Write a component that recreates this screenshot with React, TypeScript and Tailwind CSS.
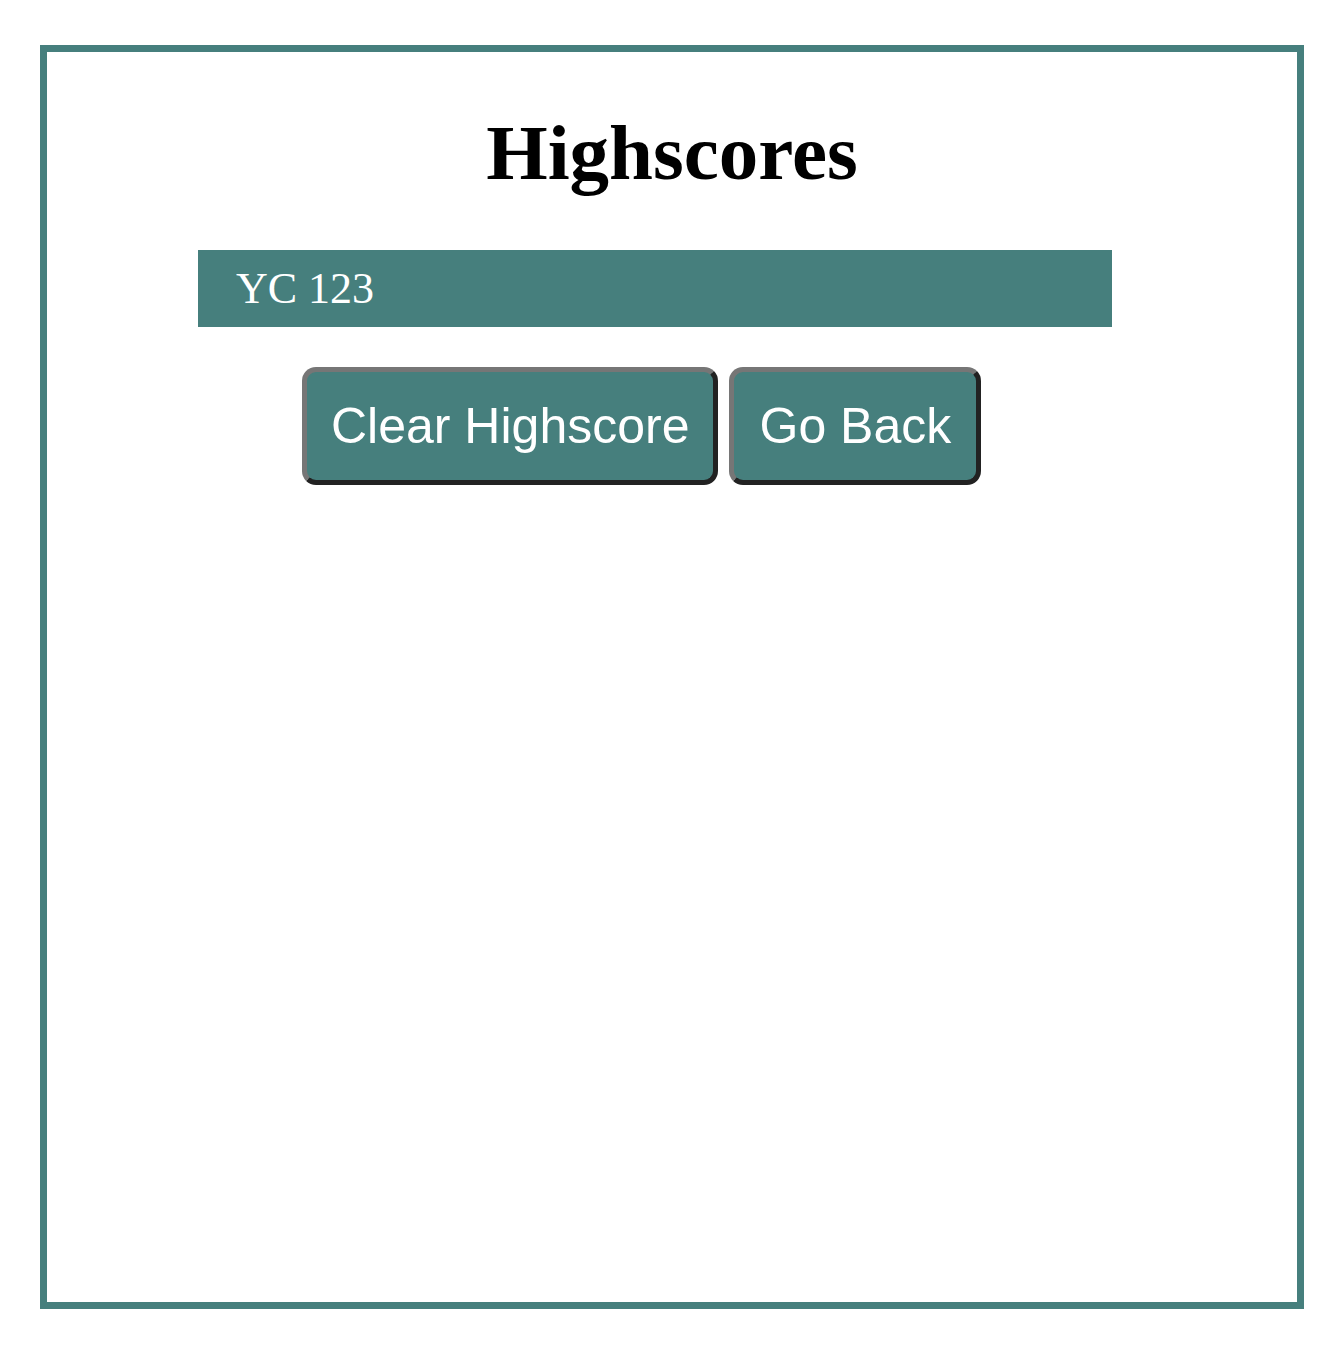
export default function App() {
  return (
    <div className="min-h-[1360px] bg-white pl-[40px] pt-[45px]">
      <div className="w-[1264px] h-[1264px] border-[7px] border-[#467f7d] bg-white">
        <h1
          className="text-center text-[79px] font-bold text-black leading-none mt-[61px]"
          style={{ fontFamily: '"Liberation Serif", "Times New Roman", serif' }}
        >
          Highscores
        </h1>
        <div className="ml-[151px] w-[914px] h-[77px] mt-[58px] bg-[#467f7d] flex items-center pl-[38px]">
          <span
            className="text-white text-[44px] leading-none"
            style={{ fontFamily: '"Liberation Serif", "Times New Roman", serif' }}
          >
            YC 123
          </span>
        </div>
        <div
          className="flex ml-[255px] mt-[40px] gap-[11px]"
          style={{ fontFamily: '"Liberation Sans", Arial, sans-serif' }}
        >
          <button className="h-[118px] px-[24px] bg-[#467f7d] text-white text-[50px] rounded-[14px] border-[5px] border-t-[#767676] border-l-[#767676] border-b-[#222] border-r-[#222]">
            Clear Highscore
          </button>
          <button className="h-[118px] px-[25px] bg-[#467f7d] text-white text-[50px] rounded-[14px] border-[5px] border-t-[#767676] border-l-[#767676] border-b-[#222] border-r-[#222]">
            Go Back
          </button>
        </div>
      </div>
    </div>
  )
}
